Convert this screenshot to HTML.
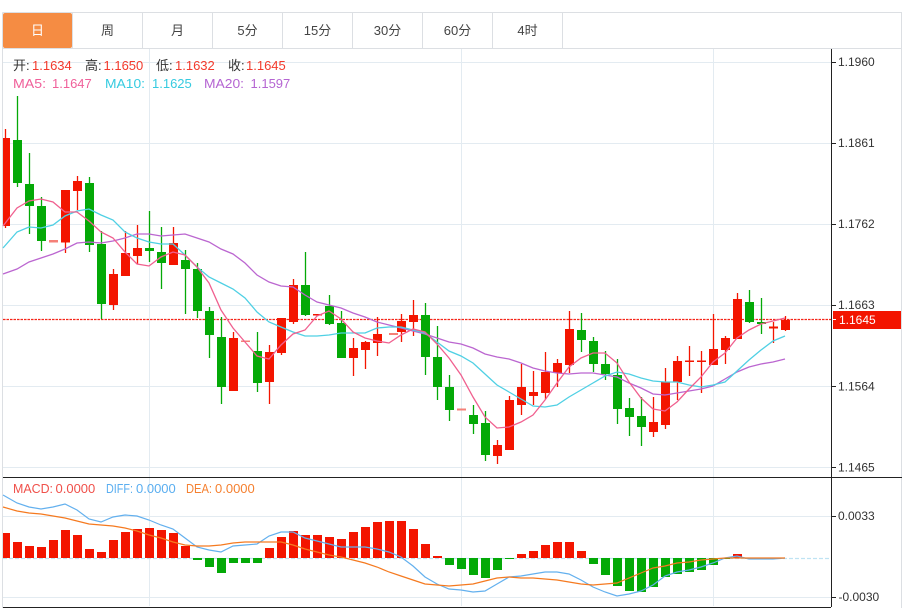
<!DOCTYPE html>
<html><head><meta charset="utf-8"><style>
html,body{margin:0;padding:0;background:#fff;width:905px;height:608px;overflow:hidden}
svg{display:block;font-family:"Liberation Sans","Noto Sans CJK SC",sans-serif}
.t{font-size:13px;fill:#444;text-anchor:middle}
.a{font-size:12px;fill:#333}
.l{font-size:13px}
</style></head><body>
<svg width="905" height="608" viewBox="0 0 905 608" xmlns="http://www.w3.org/2000/svg">
<!-- frame -->
<path d="M2.5 12.5H901.5V608M2.5 12.5V608M2 48.5H902M72.5 13V48M142.5 13V48M212.5 13V48M282.5 13V48M352.5 13V48M422.5 13V48M492.5 13V48M562.5 13V48" fill="none" stroke="#dcdfe3"/>
<rect x="3" y="13" width="69" height="35" rx="2" fill="#f58c43"/>
<text class="t" x="37.5" y="35" style="fill:#fff">日</text>
<text class="t" x="107.5" y="35">周</text>
<text class="t" x="177.5" y="35">月</text>
<text class="t" x="247.5" y="35">5分</text>
<text class="t" x="317.5" y="35">15分</text>
<text class="t" x="387.5" y="35">30分</text>
<text class="t" x="457.5" y="35">60分</text>
<text class="t" x="527.5" y="35">4时</text>
<!-- grid -->
<path d="M3 62.5H831M3 143.5H831M3 224.5H831M3 305.5H831M3 386.5H831M3 467.5H831M3 516.5H831M3 597.5H831M149.5 49V606M461.5 49V606M713.5 49V606" fill="none" stroke="#e3ebf1"/>
<!-- current price -->
<path d="M3 319.5H831" stroke="#f4261a" stroke-width="1.2" stroke-dasharray="2.500 1" fill="none"/>
<!-- wicks red -->
<path fill="none" stroke="#f31500" stroke-width="1.300" d="M5.5 129V228M65.5 190V253M77.5 176V210M113.5 269V310M125.5 231V276M137.5 225V264M173.5 227V265M233.5 332V391M269.5 345V404M281.5 318V355M293.5 279V324M353.5 338V376M365.5 341V369M377.5 317V356M401.5 314V342M413.5 300V336M497.5 440V464M509.5 396V450M521.5 364V415M533.5 371V405M545.5 352V399M557.5 359V387M569.5 311V373M653.5 397V437M665.5 368V429M677.5 356V400M689.5 346V376M701.5 351V393M713.5 314V365M725.5 336V364M737.5 293V339M773.5 322V343M785.5 316V331"/>
<!-- wicks green -->
<path fill="none" stroke="#04a907" stroke-width="1.300" d="M17.5 96V187M29.5 153V234M41.5 197V251M89.5 177V252M101.5 231V319M149.5 211V262M161.5 227V289M185.5 250V314M197.5 263V318M209.5 307V358M221.5 317V404M257.5 332V392M305.5 252V316M329.5 295V325M341.5 311V358M425.5 303V375M437.5 326V400M449.5 375V421M473.5 405V434M485.5 411V461M581.5 313V352M593.5 337V372M605.5 351V380M617.5 359V424M629.5 398V436M641.5 397V446M749.5 290V323M761.5 298V334"/>
<!-- bodies red -->
<path fill="#f31500" d="M3 138h7v88h-7zM61 190h9v52.500h-9zM73 181h9v10h-9zM109 274h9v31h-9zM121 253h9v23h-9zM133 248h9v8h-9zM169 243h9v22h-9zM229 338h9v53h-9zM265 352h9v30h-9zM277 318h9v35h-9zM289 285h9v37h-9zM349 348h9v10h-9zM361 342h9v8h-9zM373 334h9v9h-9zM397 321h9v11h-9zM409 315h9v7h-9zM493 445h9v11h-9zM505 400h9v50h-9zM517 387h9v18h-9zM529 392h9v4h-9zM541 372h9v21h-9zM553 363h9v10h-9zM565 329h9v36h-9zM649 422h9v10h-9zM661 382h9v43h-9zM673 361h9v21h-9zM709 349h9v16h-9zM721 338h9v12h-9zM733 299h9v40h-9zM781 320h9v10h-9z"/>
<path fill="#f31500" d="M685 360.500h9v1.500h-9zM697 360.500h9v1.500h-9zM769 326.500h9v2h-9zM313 314h9v1.500h-9z"/>
<path fill="#f58078" d="M49 240h9v2.500h-9zM241 340.500h9v1.500h-9zM389 333h9v2h-9zM457 408.500h9v2h-9z"/>
<!-- bodies green -->
<path fill="#04a907" d="M13 140h9v43h-9zM25 184h9v22h-9zM37 206h9v35h-9zM85 183h9v62h-9zM97 244h9v60h-9zM145 248h9v3h-9zM157 252h9v11h-9zM181 260h9v9h-9zM193 269h9v42h-9zM205 311h9v24h-9zM217 337h9v50h-9zM253 351h9v32h-9zM301 285h9v30h-9zM325 306h9v18h-9zM337 323h9v35h-9zM421 315h9v42h-9zM433 357h9v30h-9zM445 387h9v23h-9zM469 415h9v9h-9zM481 423h9v32h-9zM577 330h9v10h-9zM589 341h9v23h-9zM601 364h9v10h-9zM613 375h9v34h-9zM625 408h9v9h-9zM637 416h9v11h-9zM745 302h9v20h-9zM757 322h9v2h-9z"/>
<!-- MA lines -->
<polyline fill="none" stroke="#bb66d0" stroke-width="1.300" points="3,274 17,269 29,262 41,258 53,254 65,249 77,243 89,242 101,243 113,241 125,238 137,234 149,234 161,236 173,235 185,234 197,238 209,242 221,249 233,254 245,263 257,275 269,282 281,286 293,287 305,295 317,302 329,305 341,308 353,313 365,317 377,322 389,325 401,328 413,331 425,334 437,338 449,342 461,344 473,348 485,354 497,357 509,359 521,363 533,368 545,371 557,373 569,374 581,373 593,373 605,375 617,377 629,383 641,388 653,394 665,395 677,393 689,391 701,389 713,386 725,379 737,372 749,367 761,364 773,362 785,359"/>
<polyline fill="none" stroke="#4fd0e4" stroke-width="1.300" points="3,248 17,232 29,227 41,228 53,225 65,216 77,211 89,209 101,215 113,220 125,232 137,238 149,242 161,244 173,244 185,255 197,267 209,277 221,283 233,289 245,298 257,312 269,322 281,327 293,332 305,336 317,336 329,335 341,333 353,333 365,333 377,328 389,327 401,327 413,330 425,333 437,342 449,351 461,356 473,363 485,374 497,385 509,392 521,399 533,406 545,407 557,405 569,397 581,390 593,383 605,376 617,372 629,374 641,378 653,381 665,382 677,382 689,385 701,387 713,385 725,382 737,371 749,360 761,350 773,341 785,336"/>
<polyline fill="none" stroke="#f0608f" stroke-width="1.300" points="3,226 17,208 29,201 41,199 53,202 65,212 77,212 89,221 101,232 113,238 125,252 137,264 149,266 161,257 173,252 185,255 197,267 209,283 221,310 233,328 245,342 257,356 269,359 281,345 293,334 305,330 317,316 329,311 341,319 353,332 365,338 377,341 389,343 401,335 413,329 425,332 437,344 449,358 461,375 473,397 485,417 497,428 509,427 521,422 533,415 545,400 557,383 569,367 581,358 593,353 605,353 617,363 629,382 641,398 653,409 665,411 677,402 689,389 701,377 713,362 725,353 737,338 749,330 761,324 773,321 785,318"/>
<!-- MACD -->
<path d="M3 558.500H831" stroke="#bfe3f3" stroke-width="1.200" stroke-dasharray="4 2" fill="none"/>
<path fill="#f31500" d="M3 533h7v25h-7zM13 542h9v16h-9zM25 546h9v12h-9zM37 547h9v11h-9zM49 540h9v18h-9zM61 530h9v28h-9zM73 535h9v23h-9zM85 549h9v9h-9zM97 552h9v6h-9zM109 540h9v18h-9zM121 532h9v26h-9zM133 529h9v29h-9zM145 528h9v30h-9zM157 530h9v28h-9zM169 533h9v25h-9zM181 546h9v12h-9zM265 548h9v10h-9zM277 537h9v21h-9zM289 531h9v27h-9zM301 535h9v23h-9zM313 535h9v23h-9zM325 537h9v21h-9zM337 539h9v19h-9zM349 532h9v26h-9zM361 527h9v31h-9zM373 522h9v36h-9zM385 521h9v37h-9zM397 521h9v37h-9zM409 529h9v29h-9zM421 544h9v14h-9zM433 556h9v2h-9zM517 554h9v4h-9zM529 551h9v7h-9zM541 545h9v13h-9zM553 542h9v16h-9zM565 542h9v16h-9zM577 551h9v7h-9zM733 554h9v4h-9z"/>
<path fill="#04a907" d="M193 558h9v2h-9zM205 558h9v9h-9zM217 558h9v15h-9zM229 558h9v5h-9zM241 558h9v5h-9zM253 558h9v5h-9zM445 558h9v7h-9zM457 558h9v11h-9zM469 558h9v17h-9zM481 558h9v20h-9zM493 558h9v12h-9zM505 558h9v1h-9zM589 558h9v6h-9zM601 558h9v17h-9zM613 558h9v28h-9zM625 558h9v33h-9zM637 558h9v34h-9zM649 558h9v29h-9zM661 558h9v19h-9zM673 558h9v16h-9zM685 558h9v14h-9zM697 558h9v12h-9zM709 558h9v7h-9zM721 558h9v1h-9z"/>
<path fill="#9cc9a0" d="M745 558h9v1h-9zM757 558h9v1h-9zM769 558h9v1h-9z"/>
<polyline fill="none" stroke="#63b0ee" stroke-width="1.200" points="3,495 17,503 29,507 41,509 53,507 65,504 77,510 89,519 101,522 113,517 125,515 137,516 149,520 161,525 173,529 185,538 197,547 209,550 221,552 233,546 245,545 257,544 269,536 281,532 293,532 305,538 317,541 329,544 341,547 353,547 365,547 377,549 389,552 401,557 413,566 425,577 437,584 449,589 461,590 473,592 485,591 497,584 509,577 521,576 533,574 545,572 557,572 569,574 581,580 593,587 605,592 617,596 629,594 641,591 653,585 665,576 677,572 689,570 701,567 713,563 725,558 737,556 749,559 761,559 773,559 785,558"/>
<polyline fill="none" stroke="#f57a20" stroke-width="1.200" points="3,507 17,511 29,513 41,514 53,516 65,518 77,521 89,524 101,525 113,526 125,528 137,531 149,535 161,538 173,542 185,545 197,546 209,546 221,545 233,543 245,542 257,542 269,542 281,542 293,545 305,549 317,552 329,555 341,557 353,560 365,563 377,567 389,572 401,576 413,580 425,584 437,585 449,586 461,585 473,584 485,581 497,578 509,577 521,578 533,578 545,579 557,580 569,582 581,584 593,585 605,584 617,583 629,578 641,573 653,568 665,566 677,563 689,562 701,560 713,559 725,558 737,558 749,558 761,558 773,558 785,558"/>
<!-- axes -->
<path d="M3 477.500H902M3 607.500H831M831.500 49V607M832 62.500h4M832 143.500h4M832 224.500h4M832 305.500h4M832 386.500h4M832 467.500h4M832 516.500h4M832 597.500h4" fill="none" stroke="#222"/>
<g class="a">
<text class="a" x="838" y="66">1.1960</text>
<text class="a" x="838" y="147">1.1861</text>
<text class="a" x="838" y="228">1.1762</text>
<text class="a" x="838" y="309">1.1663</text>
<text class="a" x="838" y="390.500">1.1564</text>
<text class="a" x="838" y="471.500">1.1465</text>
<text class="a" x="838" y="520">0.0033</text>
<text class="a" x="838.500" y="601">-0.0030</text>
</g>
<rect x="833" y="311" width="68" height="18" fill="#f31500"/>
<path d="M833 319.500h3" stroke="#fff"/>
<text class="a" x="839" y="324" style="fill:#fff">1.1645</text>
<!-- legend -->
<g class="l">
<text class="l" x="13" y="70" fill="#333">开:</text><text class="l" x="32" y="70" fill="#f33a2c">1.1634</text>
<text class="l" x="85" y="70" fill="#333">高:</text><text class="l" x="103.500" y="70" fill="#f33a2c">1.1650</text>
<text class="l" x="156" y="70" fill="#333">低:</text><text class="l" x="175" y="70" fill="#f33a2c">1.1632</text>
<text class="l" x="228" y="70" fill="#333">收:</text><text class="l" x="246" y="70" fill="#f33a2c">1.1645</text>
<text class="l" x="13" y="88" fill="#f0609a" textLength="33" lengthAdjust="spacingAndGlyphs">MA5:</text><text class="l" x="52" y="88" fill="#f0609a">1.1647</text>
<text class="l" x="105" y="88" fill="#36cbe0" textLength="40" lengthAdjust="spacingAndGlyphs">MA10:</text><text class="l" x="152" y="88" fill="#36cbe0">1.1625</text>
<text class="l" x="204" y="88" fill="#b565d2" textLength="40" lengthAdjust="spacingAndGlyphs">MA20:</text><text class="l" x="250.500" y="88" fill="#b565d2">1.1597</text>
<text class="l" x="13" y="493" fill="#f0504a" textLength="40" lengthAdjust="spacingAndGlyphs">MACD:</text><text class="l" x="55.500" y="493" fill="#f0504a">0.0000</text>
<text class="l" x="106" y="493" fill="#5aaef0" textLength="27" lengthAdjust="spacingAndGlyphs">DIFF:</text><text class="l" x="136" y="493" fill="#5aaef0">0.0000</text>
<text class="l" x="186" y="493" fill="#f58030" textLength="26" lengthAdjust="spacingAndGlyphs">DEA:</text><text class="l" x="215" y="493" fill="#f58030">0.0000</text>
</g>
</svg>
</body></html>
